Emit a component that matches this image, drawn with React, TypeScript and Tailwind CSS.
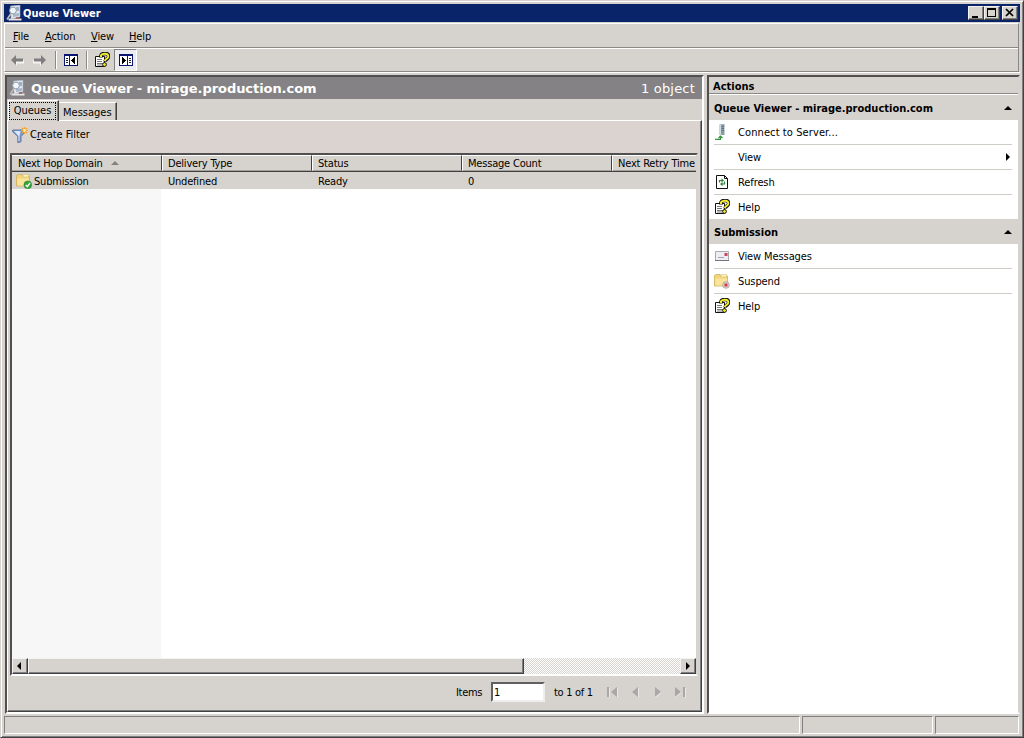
import React from 'react';
import { clsx } from 'clsx';

interface IconProps {
  className?: string;
}

function ViewerIcon({ className }: IconProps) {
  return (
    <svg viewBox="0 0 16 16" className={clsx('w-4 h-4 shrink-0', className)}>
      <path d="M4.500 1L14 0V12L5 14Z" fill="#dfe6ee" stroke="#9ba6b4" strokeWidth=".6" />
      <path d="M10 2h3v4h-3z" fill="#9fb0c4" />
      <path d="M7 9l6-1v3l-6 1z" fill="#a9b7c8" />
      <circle cx="7" cy="5.500" r="3.400" fill="#eff7fb" stroke="#8f9daf" />
      <path d="M5 8.500L1 14.500" stroke="#c3b8b6" strokeWidth="1.700" />
      <path d="M2.500 13.500h13v2h-13z" fill="#e8e6e4" />
      <path d="M10 12h3v2h-3z" fill="#a96e69" />
    </svg>
  );
}

function HelpIcon() {
  return (
    <svg viewBox="0 0 16 16" className="w-4 h-4 shrink-0">
      <path d="M1.500 4.500h9v10h-9z" fill="#fff" stroke="#111" />
      <path d="M3 7.500h5M3 9.500h5M3 11.500h6M3 13h5" stroke="#555" strokeWidth=".8" />
      <path d="M7 5.500V3.500C7.500 1.500 9 1.500 11 1.500c3 0 4 1.500 3.500 3.500-.5 2-3 2-3.500 4.500" fill="none" stroke="#111" strokeWidth="3.600" />
      <path d="M7 5V3.500C7.500 1.700 9 1.700 11 1.700c2.800 0 3.500 1.300 3.200 3.300-.5 2-3 2-3.500 4" fill="none" stroke="#f4ee2a" strokeWidth="2" />
      <circle cx="10.500" cy="12.500" r="1.900" fill="#f4ee2a" stroke="#111" />
    </svg>
  );
}

function FolderIcon({ paused }: { paused?: boolean }) {
  return (
    <svg viewBox="0 0 16 16" className="w-4 h-4 shrink-0">
      <path d="M.5 2.500L2 1.500h4l1 1.500h6.500v10H.5z" fill="#f0d57c" stroke="#d2b055" strokeWidth=".8" />
      <path d="M7 1.500h5.500V4H7z" fill="#fff4c6" stroke="#d8bd6b" strokeWidth=".6" />
      <path d="M1.500 5.500h11.500v7H1.500z" fill="#f9e49a" />
      {paused ? (
        <>
          <circle cx="12" cy="12" r="3.300" fill="#e3d5da" stroke="#a89da2" strokeWidth=".8" />
          <path d="M10.500 10.500h3v3h-3z" fill="#d23c3c" />
        </>
      ) : (
        <>
          <circle cx="11.800" cy="11.800" r="3.900" fill="#35a23b" stroke="#258430" strokeWidth=".5" />
          <path d="M9.700 12l1.600 1.700L14 10" fill="none" stroke="#fff" strokeWidth="1.300" />
        </>
      )}
    </svg>
  );
}

function ServerIcon() {
  return (
    <svg viewBox="0 0 16 16" className="w-4 h-4 shrink-0">
      <path d="M5.500.5L10.500 0v11l-5 0z" fill="#8d9dab" />
      <path d="M5.500 1H7v10H5.500z" fill="#d3dce2" />
      <path d="M7.500 2.500H10M7.500 4.500H10M7.500 6.500H10" stroke="#54687a" strokeWidth=".8" />
      <path d="M8 8h2v1H8z" fill="#5fb660" />
      <path d="M1 15.300h5.500v-3M4.500 14l2-2 2 2" fill="none" stroke="#37943c" strokeWidth="1.200" />
    </svg>
  );
}

function RefreshIcon() {
  return (
    <svg viewBox="0 0 16 16" className="w-4 h-4 shrink-0">
      <path d="M2.500 1.500h8l3 3v10h-11z" fill="#fff" stroke="#111" />
      <path d="M10.500 1.500v3h3" fill="none" stroke="#111" />
      <path d="M5.500 8.500V6.500H8M10.500 7.500v2.500H8" fill="none" stroke="#338038" strokeWidth="1.200" />
      <path d="M7.500 4.300l2.500 2.200-2.500 2zM8.500 8l-2.500 2 2.500 2.200z" fill="#338038" />
    </svg>
  );
}

function MailIcon() {
  return (
    <svg viewBox="0 0 16 16" className="w-4 h-4 shrink-0">
      <path d="M1.500 3.500h13v9h-13z" fill="#eeedf2" stroke="#aaa8b0" />
      <path d="M1 12.500h14" stroke="#77757d" />
      <path d="M10.500 5h3v3h-3z" fill="#c4475a" />
      <path d="M4 9.500h6" stroke="#a5a5b3" />
    </svg>
  );
}

function FilterIcon() {
  return (
    <svg viewBox="0 0 16 16" className="w-4 h-4 shrink-0">
      <path d="M.6 3h12.400v2L9 9.500v5.300l-3.200.8V9.500L.6 4.600z" fill="#7d9bd0" stroke="#5c6f99" strokeWidth=".9" />
      <path d="M2 4h6.500l-1 5v5l-1 .3V9z" fill="#dbe8fa" />
      <path d="M12.500 0v7M9 3.500h7M10 1l5 5M15 1l-5 5" stroke="#efa431" strokeWidth="1.200" />
      <circle cx="12.500" cy="3.500" r="1.400" fill="#fff0a8" />
    </svg>
  );
}

function PaneIcon({ flip }: { flip?: boolean }) {
  return (
    <svg viewBox="0 0 14 12" className="w-3.5 h-3 shrink-0" shapeRendering="crispEdges">
      <path d="M0 0h14v12H0z" fill="#0a1672" />
      <path d="M1 2h12v9H1z" fill="#fff" />
      {flip ? (
        <>
          <path d="M8 2h1v9H8z" fill="#0a1672" />
          <path d="M10 4h2v1h-2zM10 6h2v1h-2zM10 8h2v1h-2z" fill="#222" />
          <path d="M3 3h1v1h1v1h1v1h1v1H6v1H5v1H4v1H3z" fill="#000" />
        </>
      ) : (
        <>
          <path d="M5 2h1v9H5z" fill="#0a1672" />
          <path d="M2 4h2v1H2zM2 6h2v1H2zM2 8h2v1H2z" fill="#222" />
          <path d="M11 3h-1v1H9v1H8v1H7v1h1v1h1v1h1v1h1z" fill="#000" />
        </>
      )}
    </svg>
  );
}

function ArrowIcon({ right }: { right?: boolean }) {
  return (
    <svg viewBox="0 0 13 11" className="w-[13px] h-[11px]">
      <g transform={right ? 'translate(13 0) scale(-1 1)' : undefined}>
        <path d="M1 6L6 11V8.500h7V5z" fill="#f6f5f3" />
        <path d="M0 5L5 0v3.500h7v3H5V10z" fill="#7f7e7e" />
      </g>
    </svg>
  );
}

function Triangle({ dir, className }: { dir: 'up' | 'left' | 'right'; className?: string }) {
  const paths = {
    up: 'M0 6L4 2L8 6Z',
    left: 'M6 0V8L2 4Z',
    right: 'M2 0V8L6 4Z',
  };
  return (
    <svg viewBox="0 0 8 8" className={clsx('w-2 h-2 shrink-0', className)}>
      <path d={paths[dir]} fill="currentColor" />
    </svg>
  );
}

const raised =
  'bg-[#d6d3ce] border border-t-[#f4f3f1] border-l-[#f4f3f1] border-r-[#404040] border-b-[#404040] shadow-[inset_-1px_-1px_0_#808080]';

function TitleBar() {
  return (
    <div className="h-[18px] bg-[#0a246a] flex items-center pl-0.5 pr-0.5 text-white">
      <ViewerIcon />
      <span className="ml-px pt-0.5 font-bold">Queue Viewer</span>
      <div className="ml-auto flex">
        <div className={clsx(raised, 'w-4 h-3.5')}>
          <div className="w-1.5 h-0.5 bg-black mt-[9px] ml-[3px]" />
        </div>
        <div className={clsx(raised, 'w-4 h-3.5 mr-0.5 pt-px pl-0.5')}>
          <div className="w-[9px] h-[9px] border border-t-2 border-black" />
        </div>
        <div className={clsx(raised, 'w-4 h-3.5')}>
          <svg viewBox="0 0 14 12" className="w-3.5 h-3">
            <path d="M3 2l7 7M10 2l-7 7" stroke="#000" strokeWidth="1.700" />
          </svg>
        </div>
      </div>
    </div>
  );
}

function MenuBar() {
  const items = [
    { label: 'File', width: 'w-8' },
    { label: 'Action', width: 'w-[46px]' },
    { label: 'View', width: 'w-[38px]' },
    { label: 'Help', width: 'w-9' },
  ];
  return (
    <div className="h-6 flex items-center pl-2 pt-0.5 border-b border-[#8b8985] tracking-[-0.1px]">
      {items.map((item) => (
        <span key={item.label} className={item.width}>
          <span className="underline underline-offset-1">{item.label[0]}</span>
          {item.label.slice(1)}
        </span>
      ))}
    </div>
  );
}

function Separator() {
  return <div className="w-0.5 h-[18px] bg-[#8b8985] border-r border-white" />;
}

function Toolbar() {
  return (
    <div className="h-[23px] flex items-center border-t border-white pl-1.5">
      <ArrowIcon />
      <div className="ml-[9px] mr-[9px]"><ArrowIcon right /></div>
      <Separator />
      <div className="ml-[7px] mr-2"><PaneIcon /></div>
      <Separator />
      <div className="ml-1.5 mr-1"><HelpIcon /></div>
      <div className="w-[23px] h-[22px] flex items-center justify-center bg-[#ececf0] border border-t-[#808080] border-l-[#808080] border-r-white border-b-white">
        <PaneIcon flip />
      </div>
    </div>
  );
}

const columns = ['Next Hop Domain', 'Delivery Type', 'Status', 'Message Count', 'Next Retry Time'];

const queues = [
  { domain: 'Submission', type: 'Undefined', status: 'Ready', count: '0' },
];

function QueueTable() {
  return (
    <div className="ml-0.5 mr-[3px] h-[523px] flex flex-col border-2 border-t-[#505050] border-l-[#505050] border-r-[#d6d3ce] border-b-white bg-white overflow-hidden tracking-[-0.2px]">
      <div className="h-[17px] shrink-0 flex bg-[#d6d3ce] border-b border-[#404040]">
        {columns.map((name, i) => (
          <div
            key={name}
            className={clsx(
              'flex items-center whitespace-nowrap border-t border-t-white border-b border-b-[#a5a29e] pt-0.5',
              i < columns.length - 1 ? 'w-[150px] shrink-0 border-r border-r-[#404040]' : 'flex-1 min-w-0',
              i > 0 ? 'border-l border-l-white pl-[5px]' : 'pl-1.5',
            )}
          >
            {name}
            {i === 0 && <Triangle dir="up" className="ml-2 mb-0.5 text-[#85827e]" />}
          </div>
        ))}
      </div>
      <div className="flex-1 bg-[linear-gradient(to_right,#f7f7f7_149px,#fff_149px)]">
        {queues.map((queue) => (
          <div key={queue.domain} className="h-[17px] flex items-center bg-[#d6d3ce]">
            <div className="w-[150px] flex items-center pl-1 gap-0.5">
              <FolderIcon />
              <span className="pt-0.5">{queue.domain}</span>
            </div>
            <div className="w-[150px] pl-1.5 pt-0.5">{queue.type}</div>
            <div className="w-[150px] pl-1.5 pt-0.5">{queue.status}</div>
            <div className="w-[150px] pl-1.5 pt-0.5">{queue.count}</div>
          </div>
        ))}
      </div>
      <div className="h-4 flex bg-[repeating-conic-gradient(#d6d3ce_0_25%,#fff_0_50%)] bg-size-[2px_2px]">
        <div className={clsx(raised, 'w-4 flex items-center pl-0.5')}><Triangle dir="left" /></div>
        <div className={clsx(raised, 'w-[496px]')} />
        <div className={clsx(raised, 'w-4 ml-auto flex items-center justify-center')}><Triangle dir="right" /></div>
      </div>
    </div>
  );
}

function Pager() {
  return (
    <div className="h-8 flex items-center pl-[448px] text-black tracking-[-0.3px]">
      <span className="w-[35px] pt-px">Items</span>
      <div className="w-[54px] h-5 bg-white border-2 border-t-[#606060] border-l-[#606060] border-r-[#eee] border-b-[#eee] pl-px leading-[17px]">1</div>
      <span className="ml-[9px] w-[52px] pt-px whitespace-nowrap">to 1 of 1</span>
      <svg viewBox="0 0 82 12" className="w-[82px] h-3">
        <path d="M1 1h2v10H1zM11 1v10L5 6zM32 1v10L26 6zM49 1v10l6-5zM69 1v10l6-5zM77 1h2v10h-2z" fill="#aaa7a6" />
        <path d="M3.500 2v9.500M11.500 2v9.500M32.500 2v9.500M49 11.500l6-5M69 11.500l6-5M79.500 2v9.500" stroke="#f1eeee" strokeWidth=".8" />
      </svg>
    </div>
  );
}

function QueuePane() {
  return (
    <div className="w-[699px] bg-[#d6d3ce] border-2 border-t-[#505050] border-l-[#505050] border-r-white border-b-white flex flex-col">
      <div className="h-[22px] flex items-center bg-[#848284] text-white pl-[2px] pr-[7px] font-['DejaVu_Sans'] text-[13px]">
        <ViewerIcon />
        <span className="ml-1.5 pt-px font-bold tracking-[-0.06px]">Queue Viewer - mirage.production.com</span>
        <span className="ml-auto pt-px tracking-[0.2px]">1 object</span>
      </div>
      <div className="h-[21px] flex items-end pl-px">
        <div className="w-[51px] h-[21px] -mb-px z-10 pt-px bg-[#d6d3ce] border border-white border-b-0 border-r-[#404040] shadow-[inset_-1px_0_0_#808080]">
          <div className="h-[18px] w-[47px] border border-dotted border-black text-center leading-[15px]">Queues</div>
        </div>
        <div className="w-[58px] h-[18px] border border-white border-l-0 border-b-0 border-r-[#404040] shadow-[inset_-1px_0_0_#808080] pl-1 leading-[19px]">Messages</div>
      </div>
      <div className="flex-1 flex flex-col bg-linear-to-b from-[#dbd3cf] to-[#d6d3ce] border border-t-white border-l-white border-r-[#404040] border-b-[#404040] shadow-[inset_-1px_-1px_0_#808080]">
        <div className="h-8 flex items-center pl-1 pb-1 gap-[2px]">
          <FilterIcon />
          <span className="tracking-[-0.05px]">C<span className="underline underline-offset-1">r</span>eate Filter</span>
        </div>
        <QueueTable />
        <Pager />
      </div>
    </div>
  );
}

interface Action {
  label: string;
  icon?: React.ReactNode;
  submenu?: boolean;
}

function ActionSection({ title, actions }: { title: string; actions: Action[] }) {
  return (
    <div>
      <div className="h-[25px] flex items-center bg-[#d6d2ce] pl-[5px] pr-1.5 font-bold">
        <span className="pt-0.5">{title}</span>
        <Triangle dir="up" className="ml-auto" />
      </div>
      <div className="pl-[5px] pr-1.5">
        {actions.map((action, i) => (
          <div
            key={action.label}
            className={clsx(
              'flex items-center',
              i < actions.length - 1 ? 'h-[25px] border-b border-[#d0cdc9]' : 'h-6',
            )}
          >
            <div className="w-6">{action.icon}</div>
            <span className={clsx('pt-0.5', action.label.endsWith('...') ? 'tracking-[0.1px]' : 'tracking-[-0.1px]')}>{action.label}</span>
            {action.submenu && <Triangle dir="right" className="ml-auto" />}
          </div>
        ))}
      </div>
    </div>
  );
}

function ActionsPane() {
  return (
    <div className="w-[313px] bg-white border-2 border-t-[#505050] border-l-[#505050] border-r-[#d6d3ce] border-b-white">
      <div className="h-[17px] bg-[#d6d3ce] border-b border-[#8b8985] pl-1 font-bold leading-[19px]">Actions</div>
      <div className="h-px bg-white" />
      <ActionSection
        title="Queue Viewer - mirage.production.com"
        actions={[
          { label: 'Connect to Server...', icon: <ServerIcon /> },
          { label: 'View', submenu: true },
          { label: 'Refresh', icon: <RefreshIcon /> },
          { label: 'Help', icon: <HelpIcon /> },
        ]}
      />
      <ActionSection
        title="Submission"
        actions={[
          { label: 'View Messages', icon: <MailIcon /> },
          { label: 'Suspend', icon: <FolderIcon paused /> },
          { label: 'Help', icon: <HelpIcon /> },
        ]}
      />
    </div>
  );
}

function StatusBar() {
  const cell = 'h-[18px] border border-t-[#808080] border-l-[#808080] border-r-white border-b-white';
  return (
    <div className="flex gap-0.5 mt-0.5">
      <div className={clsx(cell, 'w-[796px]')} />
      <div className={clsx(cell, 'w-[131px]')} />
      <div className={clsx(cell, 'w-[84px]')} />
    </div>
  );
}

export default function App() {
  return (
    <div className="w-[1024px] h-[738px] overflow-hidden bg-[#d6d3ce] border border-t-[#d6d3ce] border-l-[#d6d3ce] border-r-[#404040] border-b-[#404040] shadow-[inset_1px_1px_0_#fff,inset_-1px_-1px_0_#808080] pt-[3px] px-[3px] font-['DejaVu_Sans_Condensed','DejaVu_Sans',sans-serif] text-[11px] leading-[14px] text-black">
      <TitleBar />
      <div className="h-[49px] mt-px border border-white border-r-[#8b8985] border-b-[#8b8985] mr-px">
        <MenuBar />
        <Toolbar />
      </div>
      <div className="h-px bg-white" />
      <div className="flex h-[639px] mt-[2px] pl-px justify-between">
        <QueuePane />
        <ActionsPane />
      </div>
      <StatusBar />
    </div>
  );
}
